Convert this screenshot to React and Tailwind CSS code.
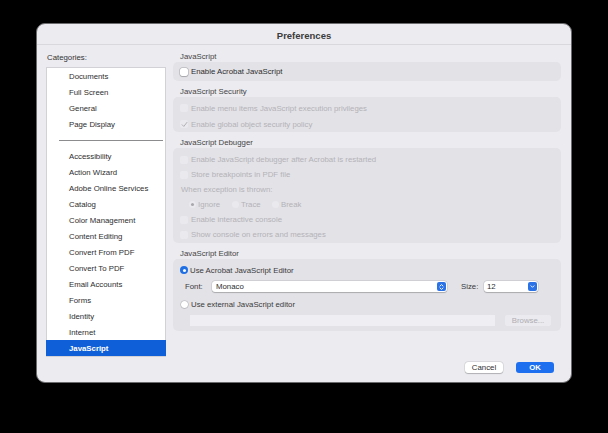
const topCategories = ["Documents", "Full Screen", "General", "Page Display"];
const categories = [
  "Accessibility",
  "Action Wizard",
  "Adobe Online Services",
  "Catalog",
  "Color Management",
  "Content Editing",
  "Convert From PDF",
  "Convert To PDF",
  "Email Accounts",
  "Forms",
  "Identity",
  "Internet",
  "JavaScript",
];

function Checkbox({ checked, disabled }) {
  return (
    <div
      className={
        "w-[8px] h-[8px] rounded-[2px] flex items-center justify-center shrink-0 " +
        (disabled
          ? "bg-[#eae9ed]"
          : "bg-white shadow-[0_0_0_0.5px_rgba(0,0,0,0.25),0_0.5px_1px_rgba(0,0,0,0.15)]")
      }
    >
      {checked && (
        <svg width="7" height="7" viewBox="0 0 8 8">
          <path d="M1.3 4.3 L3.2 6.2 L6.8 1.6" fill="none" stroke="#a9a8ad" strokeWidth="1" strokeLinecap="round" strokeLinejoin="round" />
        </svg>
      )}
    </div>
  );
}

function CheckRow({ label, checked, disabled, h = "h-[16px]" }) {
  return (
    <div className={"flex items-center gap-[3px] pl-[7px] " + h}>
      <Checkbox checked={checked} disabled={disabled} />
      <span className={"pt-[1px] " + (disabled ? "text-[#b3b2b7]" : "text-[#2e2e2e]")}>{label}</span>
    </div>
  );
}

function Radio({ checked, disabled, dot }) {
  if (checked) {
    return (
      <div className="w-[8px] h-[8px] rounded-full bg-[#1f6fe5] flex items-center justify-center shrink-0">
        <div className="w-[3px] h-[3px] rounded-full bg-white" />
      </div>
    );
  }
  return (
    <div
      className={
        "w-[7px] h-[7px] rounded-full flex items-center justify-center shrink-0 " +
        (disabled ? "bg-[#eae9ed]" : "bg-white shadow-[0_0_0_0.5px_rgba(0,0,0,0.2),0_0.5px_1px_rgba(0,0,0,0.15)]")
      }
    >
      {dot && <div className="w-[2.5px] h-[2.5px] rounded-full bg-[#a9a8ad]" />}
    </div>
  );
}

function Section({ title, className, children }) {
  return (
    <div className={className}>
      <div className="h-[11px] pt-[2px] pl-[7px] text-[#454545]">{title}</div>
      {children}
    </div>
  );
}

export default function App() {
  return (
    <div
      className="w-[608px] h-[433px] bg-black pt-[23px] pl-[36px] text-[7.8px] leading-none"
      style={{ fontFamily: "'Liberation Sans', Arial, sans-serif" }}
    >
      <div className="w-[536px] h-[360px] rounded-[9px] border border-[#6b6b6e] bg-[#ecebf0] flex flex-col overflow-hidden">
        {/* Title bar */}
        <div className="h-[21px] border-b border-[#d9d8dd] flex justify-center pt-[7px] text-[9.5px] font-bold text-[#3b3b3b]">
          Preferences
        </div>

        <div className="flex pt-[6px] pl-[9px] pr-[10px] gap-[7px]">
          {/* Categories */}
          <div className="w-[120px] flex flex-col">
            <div className="h-[12px] flex items-center pt-[1px] pl-[1px] text-[#333]">Categories:</div>
            <div className="mt-[4px] h-[290px] bg-white border border-[#d2d1d6] flex flex-col">
              {topCategories.map((c) => (
                <div key={c} className="h-[16px] flex items-center pt-[1px] pl-[22px] text-[#2e2e2e]">
                  {c}
                </div>
              ))}
              <div className="h-[16px] flex items-center pl-[12px] pr-[2px]">
                <div className="h-px w-full bg-[#8c8c8f]" />
              </div>
              {categories.map((c) => (
                <div
                  key={c}
                  className={
                    "h-[16px] flex items-center pt-[1px] " +
                    (c === "JavaScript" ? "bg-[#0f5fd8] text-white font-bold -mx-px pl-[23px]" : "pl-[22px] text-[#2e2e2e]")
                  }
                >
                  {c}
                </div>
              ))}
            </div>
          </div>

          {/* Settings */}
          <div className="w-[388px] flex flex-col">
            <Section title="JavaScript">
              <div className="h-[19px] rounded-[5px] bg-[#e3e2e7] flex items-center">
                <CheckRow label="Enable Acrobat JavaScript" />
              </div>
            </Section>

            <Section title="JavaScript Security" className="mt-[5px]">
              <div className="h-[35px] rounded-[5px] bg-[#e3e2e7] pt-[3px]">
                <CheckRow label="Enable menu items JavaScript execution privileges" disabled />
                <CheckRow label="Enable global object security policy" disabled checked />
              </div>
            </Section>

            <Section title="JavaScript Debugger" className="mt-[5px]">
              <div className="h-[95px] rounded-[5px] bg-[#e3e2e7] pt-[4px] text-[#b3b2b7]">
                <CheckRow label="Enable JavaScript debugger after Acrobat is restarted" disabled h="h-[15px]" />
                <CheckRow label="Store breakpoints in PDF file" disabled h="h-[15px]" />
                <div className="h-[15px] flex items-center pt-[1px] pl-[8px]">When exception is thrown:</div>
                <div className="h-[15px] flex items-center pl-[16px]">
                  {[
                    ["Ignore", true, "w-[43px]"],
                    ["Trace", false, "w-[40px]"],
                    ["Break", false, "w-[40px]"],
                  ].map(([l, on, w]) => (
                    <div key={l} className={"flex items-center gap-[2px] " + w}>
                      <Radio disabled dot={on} />
                      <span className="pt-[1px]">{l}</span>
                    </div>
                  ))}
                </div>
                <CheckRow label="Enable interactive console" disabled h="h-[15px]" />
                <CheckRow label="Show console on errors and messages" disabled h="h-[15px]" />
              </div>
            </Section>

            <Section title="JavaScript Editor" className="mt-[5px]">
              <div className="h-[72px] rounded-[5px] bg-[#e3e2e7] pt-[3px] text-[#3a3a3a]">
                <div className="h-[16px] flex items-center gap-[2px] pl-[7px]">
                  <Radio checked />
                  <span className="pt-[1px]">Use Acrobat JavaScript Editor</span>
                </div>
                <div className="mt-[3px] h-[11px] flex items-center pl-[12px]">
                  <span className="w-[27px] pt-[1px]">Font:</span>
                  <div className="w-[235px] h-[11px] bg-white rounded-[3px] shadow-[0_0_0_0.5px_rgba(0,0,0,0.12),0_0.5px_1px_rgba(0,0,0,0.2)] flex items-center justify-between pl-[4px] pr-[1px]">
                    <span className="text-[#2e2e2e] pt-[1px]">Monaco</span>
                    <div className="w-[9px] h-[9px] rounded-[2px] bg-[#2a72e6] flex items-center justify-center">
                      <svg width="7" height="8" viewBox="0 0 7 8">
                        <path d="M2 3 L3.5 1.6 L5 3 M2 5 L3.5 6.4 L5 5" fill="none" stroke="white" strokeWidth="0.9" strokeLinecap="round" strokeLinejoin="round" />
                      </svg>
                    </div>
                  </div>
                  <span className="ml-[14px] w-[23px] pt-[1px]">Size:</span>
                  <div className="w-[54px] h-[11px] bg-white rounded-[3px] shadow-[0_0_0_0.5px_rgba(0,0,0,0.12),0_0.5px_1px_rgba(0,0,0,0.2)] flex items-center justify-between pl-[3px] pr-[1px]">
                    <span className="text-[#2e2e2e] pt-[1px]">12</span>
                    <div className="w-[9px] h-[9px] rounded-[2px] bg-[#2a72e6] flex items-center justify-center">
                      <svg width="7" height="7" viewBox="0 0 7 7">
                        <path d="M2 2.8 L3.5 4.3 L5 2.8" fill="none" stroke="white" strokeWidth="0.9" strokeLinecap="round" strokeLinejoin="round" />
                      </svg>
                    </div>
                  </div>
                </div>
                <div className="mt-[4px] h-[16px] flex items-center gap-[3px] pl-[8px]">
                  <Radio />
                  <span className="pt-[1px]">Use external JavaScript editor</span>
                </div>
                <div className="mt-[3px] h-[11px] flex items-center pl-[17px]">
                  <div className="w-[305px] h-[11px] bg-[#efeef2]" />
                  <div className="ml-[10px] w-[46px] h-[11px] pt-[1px] rounded-[2px] bg-[#ebeaee] flex items-center justify-center text-[#aeadb2]">
                    Browse...
                  </div>
                </div>
              </div>
            </Section>
          </div>
        </div>

        {/* Buttons */}
        <div className="mt-[5px] flex justify-end gap-[13px] pr-[17px]">
          <div className="w-[38px] h-[11px] pt-[1px] rounded-[3px] bg-white shadow-[0_0_0_0.5px_rgba(0,0,0,0.12),0_0.5px_1px_rgba(0,0,0,0.2)] flex items-center justify-center text-[#2e2e2e]">
            Cancel
          </div>
          <div className="w-[38px] h-[11px] pt-[1px] rounded-[3px] bg-[#1d6ff0] flex items-center justify-center text-white font-bold">
            OK
          </div>
        </div>
      </div>
    </div>
  );
}
